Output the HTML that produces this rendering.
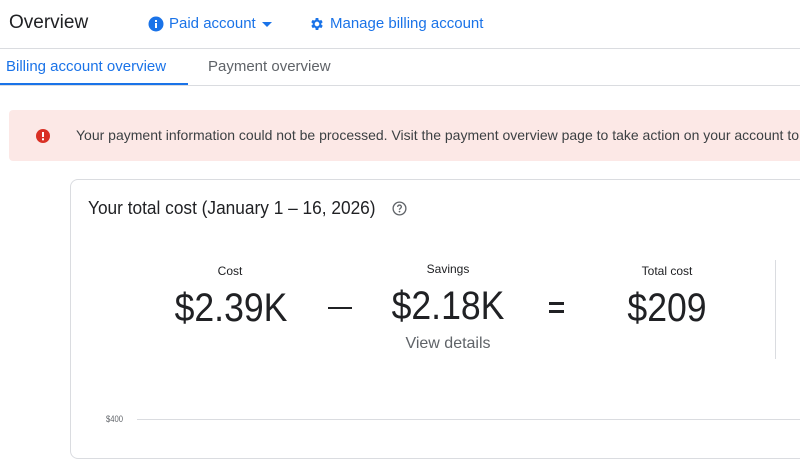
<!DOCTYPE html>
<html><head><meta charset="utf-8"><style>
*{margin:0;padding:0;box-sizing:border-box}
body{width:800px;height:434px;overflow:hidden;background:#fff;font-family:"Liberation Sans",sans-serif;position:relative;color:#202124}
.a{position:absolute;white-space:nowrap}
.big{font-size:40px;transform:scaleX(0.89);transform-origin:center}
</style></head><body>
<div class="a" style="left:9px;top:12px;font-size:19px;color:#202124">Overview</div>
<svg class="a" style="left:148px;top:16px" width="16" height="16" viewBox="0 0 16 16"><circle cx="8" cy="8" r="7.5" fill="#1a73e8"/><rect x="7" y="7" width="2" height="5" fill="#fff"/><rect x="7" y="4" width="2" height="2" fill="#fff"/></svg>
<div class="a" style="left:169px;top:15px;font-size:15px;color:#1a73e8">Paid account</div>
<div class="a" style="left:262px;top:22px;width:0;height:0;border-left:5px solid transparent;border-right:5px solid transparent;border-top:5px solid #1a73e8"></div>
<svg class="a" style="left:309px;top:16px" width="16" height="16" viewBox="0 0 24 24"><path fill="#1a73e8" d="M19.4 13a7.5 7.5 0 000-2l2.1-1.6-2-3.5-2.5 1a7 7 0 00-1.7-1L15 3h-4l-.4 2.9a7 7 0 00-1.7 1l-2.5-1-2 3.5L6.6 11a7.5 7.5 0 000 2l-2.1 1.6 2 3.5 2.5-1a7 7 0 001.7 1L11 21h4l.4-2.9a7 7 0 001.7-1l2.5 1 2-3.5zM13 15.5a3.5 3.5 0 110-7 3.5 3.5 0 010 7z" transform="translate(-1 0)"/></svg>
<div class="a" style="left:330px;top:15px;font-size:15px;color:#1a73e8">Manage billing account</div>
<div class="a" style="left:0;top:48px;width:800px;height:1px;background:#dadce0"></div>
<div class="a" style="left:6px;top:58px;font-size:15px;color:#1a73e8">Billing account overview</div>
<div class="a" style="left:208px;top:58px;font-size:15px;color:#5f6368">Payment overview</div>
<div class="a" style="left:0;top:83px;width:188px;height:2px;background:#1a73e8"></div>
<div class="a" style="left:0;top:85px;width:800px;height:1px;background:#dadce0"></div>
<div class="a" style="left:9px;top:110px;width:800px;height:51px;background:#fce8e6;border-radius:4px"></div>
<svg class="a" style="left:36px;top:129px" width="14" height="14" viewBox="0 0 14 14"><circle cx="7" cy="7" r="7" fill="#d93025"/><rect x="6" y="3" width="2" height="5" fill="#fff"/><rect x="6" y="9.3" width="2" height="2" fill="#fff"/></svg>
<div class="a" style="left:76px;top:127px;font-size:14px;color:#3c4043">Your payment information could not be processed. Visit the payment overview page to take action on your account to</div>
<div class="a" style="left:70px;top:179px;width:760px;height:280px;border:1px solid #dadce0;border-radius:8px"></div>
<div class="a" style="left:88px;top:198px;font-size:18px;color:#202124;transform:scaleX(0.96);transform-origin:left">Your total cost (January 1 – 16, 2026)</div>
<svg class="a" style="left:392px;top:201px" width="15" height="15" viewBox="0 0 16 16"><circle cx="8" cy="8" r="6.8" fill="none" stroke="#5f6368" stroke-width="1.4"/><path d="M6 6.3a2 2 0 114 0c0 1.3-2 1.5-2 3" fill="none" stroke="#5f6368" stroke-width="1.4"/><circle cx="8" cy="11.3" r=".9" fill="#5f6368"/></svg>
<div class="a" style="left:180px;width:100px;text-align:center;top:264px;font-size:12px">Cost</div>
<div class="a" style="left:398px;width:100px;text-align:center;top:262px;font-size:12px">Savings</div>
<div class="a" style="left:617px;width:100px;text-align:center;top:264px;font-size:12px">Total cost</div>
<div class="a big" style="left:161px;width:140px;text-align:center;top:286px">$2.39K</div>
<div class="a" style="left:328px;top:307px;width:24px;height:2px;background:#202124"></div>
<div class="a big" style="left:378px;width:140px;text-align:center;top:284px">$2.18K</div>
<div class="a" style="left:549px;top:302px;width:15px;height:2.5px;background:#202124"></div>
<div class="a" style="left:549px;top:310px;width:15px;height:2.5px;background:#202124"></div>
<div class="a big" style="left:597px;width:140px;text-align:center;top:286px">$209</div>
<div class="a" style="left:388px;width:120px;text-align:center;top:335px;font-size:16px;color:#5f6368">View details</div>
<div class="a" style="left:775px;top:260px;width:1px;height:99px;background:#dadce0"></div>
<div class="a" style="left:106px;top:414px;font-size:9px;color:#5f6368;transform:scaleX(0.85);transform-origin:left">$400</div>
<div class="a" style="left:137px;top:419px;width:680px;height:1px;background:#dadce0"></div>
</body></html>
